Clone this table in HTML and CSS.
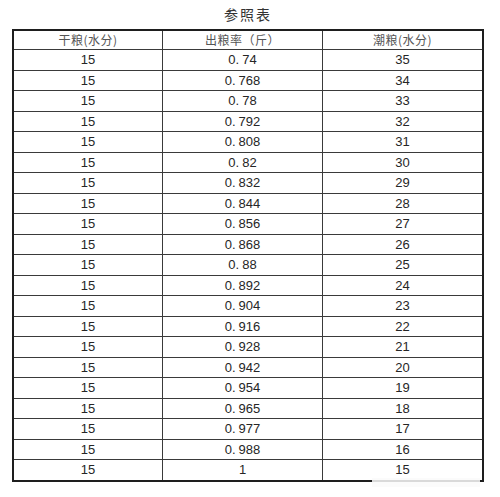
FILE: index.html
```html
<!DOCTYPE html>
<html lang="zh">
<head>
<meta charset="utf-8">
<title>参照表</title>
<link rel="stylesheet" href="styles.css">
</head>
<body>
<div class="sheet">
  <h1 class="title">参照表</h1>
  <table class="ref">
    <colgroup><col class="c1"><col class="c2"><col class="c3"></colgroup>
    <thead>
      <tr><th>干粮(水分)</th><th>出粮率（斤）</th><th>潮粮(水分)</th></tr>
    </thead>
    <tbody>
      <tr><td>15</td><td>0<span class="dot">.</span>74</td><td>35</td></tr>
      <tr><td>15</td><td>0<span class="dot">.</span>768</td><td>34</td></tr>
      <tr><td>15</td><td>0<span class="dot">.</span>78</td><td>33</td></tr>
      <tr><td>15</td><td>0<span class="dot">.</span>792</td><td>32</td></tr>
      <tr><td>15</td><td>0<span class="dot">.</span>808</td><td>31</td></tr>
      <tr><td>15</td><td>0<span class="dot">.</span>82</td><td>30</td></tr>
      <tr><td>15</td><td>0<span class="dot">.</span>832</td><td>29</td></tr>
      <tr><td>15</td><td>0<span class="dot">.</span>844</td><td>28</td></tr>
      <tr><td>15</td><td>0<span class="dot">.</span>856</td><td>27</td></tr>
      <tr><td>15</td><td>0<span class="dot">.</span>868</td><td>26</td></tr>
      <tr><td>15</td><td>0<span class="dot">.</span>88</td><td>25</td></tr>
      <tr><td>15</td><td>0<span class="dot">.</span>892</td><td>24</td></tr>
      <tr><td>15</td><td>0<span class="dot">.</span>904</td><td>23</td></tr>
      <tr><td>15</td><td>0<span class="dot">.</span>916</td><td>22</td></tr>
      <tr><td>15</td><td>0<span class="dot">.</span>928</td><td>21</td></tr>
      <tr><td>15</td><td>0<span class="dot">.</span>942</td><td>20</td></tr>
      <tr><td>15</td><td>0<span class="dot">.</span>954</td><td>19</td></tr>
      <tr><td>15</td><td>0<span class="dot">.</span>965</td><td>18</td></tr>
      <tr><td>15</td><td>0<span class="dot">.</span>977</td><td>17</td></tr>
      <tr><td>15</td><td>0<span class="dot">.</span>988</td><td>16</td></tr>
      <tr><td>15</td><td>1</td><td>15</td></tr>
    </tbody>
  </table>
  <div class="watermark"></div>
</div>
</body>
</html>
```

FILE: styles.css
```css
html, body {
  margin: 0;
  padding: 0;
  background: #ffffff;
}

.sheet {
  position: relative;
  width: 500px;
  height: 497px;
  padding-left: 12px;
  box-sizing: border-box;
}

.title {
  margin: 0;
  width: 472px;
  height: 29px;
  line-height: 29px;
  text-align: center;
  font-family: "Noto Sans CJK SC", "Noto Sans", sans-serif;
  font-size: 14px;
  font-weight: normal;
  letter-spacing: 2px;
  color: #333333;
}

.ref {
  width: 472px;
  table-layout: fixed;
  border-collapse: separate;
  border-spacing: 0;
  border: 2px solid #1e1e1e;
}

.c1 { width: 149px; }
.c2 { width: 160px; }
.c3 { width: 159px; }

.ref th,
.ref td {
  padding: 0;
  text-align: center;
  border-right: 1px solid #3a3a3a;
  border-bottom: 1px solid #3a3a3a;
}

.ref th:last-child,
.ref td:last-child {
  border-right: none;
}

.ref tbody tr:last-child td {
  border-bottom: none;
}

.ref th {
  height: 18px;
  line-height: 18px;
  font-family: "Noto Sans CJK SC", "Noto Sans", sans-serif;
  font-size: 12px;
  font-weight: normal;
  letter-spacing: 0.5px;
  color: #555555;
}

.ref td {
  height: 19.5px;
  line-height: 19.5px;
  font-family: "Liberation Sans", Arial, sans-serif;
  font-size: 13px;
  color: #262626;
}

.dot {
  padding-right: 3px;
}

.watermark {
  position: absolute;
  left: 372px;
  top: 478px;
  width: 108px;
  height: 9px;
  background: rgba(250, 250, 250, 0.85);
}
```
